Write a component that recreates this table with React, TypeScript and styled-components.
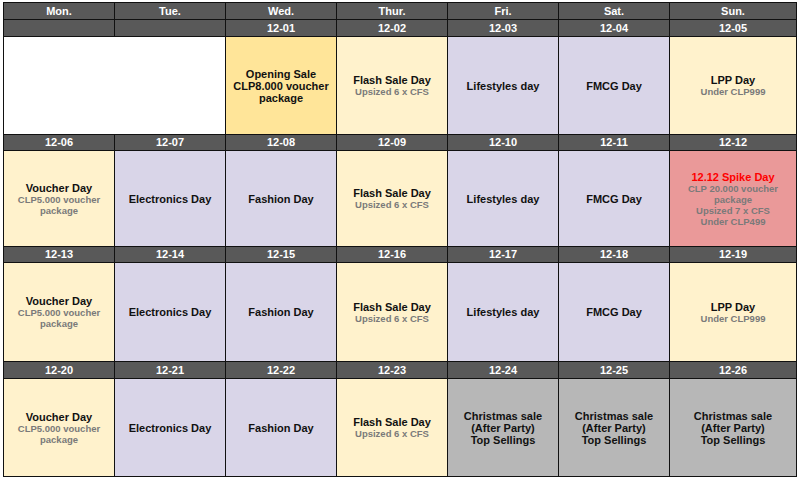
import React from "react";
import styled, { createGlobalStyle } from "styled-components";

const Global = createGlobalStyle`
  html, body { margin: 0; padding: 0; background: #ffffff; }
  body { font-family: "Liberation Sans", Arial, sans-serif; }
`;

const Page = styled.div`
  padding: 2px 0 0 3px;
`;

const Grid = styled.div`
  display: grid;
  width: 794px;
  box-sizing: border-box;
  grid-template-columns: repeat(6, 110px) 1fr;
  grid-auto-rows: auto;
  gap: 1px;
  padding: 1px;
  background: #111111;
`;

const HeadCell = styled.div<{ $h: number }>`
  height: ${(p) => p.$h}px;
  background: #595959;
  color: #ffffff;
  font-weight: bold;
  font-size: 11px;
  display: flex;
  align-items: center;
  justify-content: center;
  line-height: 1;
`;

type Tone = "white" | "gold" | "cream" | "lavender" | "red" | "gray";

const tones: Record<Tone, string> = {
  white: "#ffffff",
  gold: "#ffe599",
  cream: "#fff2cc",
  lavender: "#d9d5e8",
  red: "#ea9999",
  gray: "#b7b7b7",
};

const Cell = styled.div<{ $tone: Tone; $h: number; $span?: number }>`
  height: ${(p) => p.$h}px;
  background: ${(p) => tones[p.$tone]};
  grid-column: span ${(p) => p.$span ?? 1};
  display: flex;
  flex-direction: column;
  align-items: center;
  justify-content: center;
  text-align: center;
  padding: 0 4px;
  box-sizing: border-box;
`;

const Title = styled.div<{ $red?: boolean }>`
  font-size: 11px;
  font-weight: bold;
  line-height: 12px;
  color: ${(p) => (p.$red ? "#ff0000" : "#111111")};
`;

const Sub = styled.div`
  font-size: 9.5px;
  font-weight: bold;
  line-height: 11px;
  color: #7a7a7a;
`;

type Entry = { tone: Tone; title?: string[]; sub?: string[]; red?: boolean; span?: number };

const days = ["Mon.", "Tue.", "Wed.", "Thur.", "Fri.", "Sat.", "Sun."];

const voucher: Entry = { tone: "cream", title: ["Voucher Day"], sub: ["CLP5.000 voucher", "package"] };
const elec: Entry = { tone: "lavender", title: ["Electronics Day"] };
const fashion: Entry = { tone: "lavender", title: ["Fashion Day"] };
const flash: Entry = { tone: "cream", title: ["Flash Sale Day"], sub: ["Upsized 6 x CFS"] };
const life: Entry = { tone: "lavender", title: ["Lifestyles day"] };
const fmcg: Entry = { tone: "lavender", title: ["FMCG Day"] };
const lpp: Entry = { tone: "cream", title: ["LPP Day"], sub: ["Under CLP999"] };
const xmas: Entry = { tone: "gray", title: ["Christmas sale", "(After Party)", "Top Sellings"] };

const weeks: { dates: string[]; h: number; dh: number; cells: Entry[] }[] = [
  {
    dates: ["", "", "12-01", "12-02", "12-03", "12-04", "12-05"],
    h: 97,
    dh: 16,
    cells: [
      { tone: "white", span: 2 },
      { tone: "gold", title: ["Opening Sale", "CLP8.000 voucher", "package"] },
      flash,
      life,
      fmcg,
      lpp,
    ],
  },
  {
    dates: ["12-06", "12-07", "12-08", "12-09", "12-10", "12-11", "12-12"],
    h: 95,
    dh: 15,
    cells: [
      voucher,
      elec,
      fashion,
      flash,
      life,
      fmcg,
      {
        tone: "red",
        title: ["12.12 Spike Day"],
        red: true,
        sub: ["CLP 20.000 voucher", "package", "Upsized 7 x CFS", "Under CLP499"],
      },
    ],
  },
  {
    dates: ["12-13", "12-14", "12-15", "12-16", "12-17", "12-18", "12-19"],
    h: 98,
    dh: 15,
    cells: [voucher, elec, fashion, flash, life, fmcg, lpp],
  },
  {
    dates: ["12-20", "12-21", "12-22", "12-23", "12-24", "12-25", "12-26"],
    h: 97,
    dh: 16,
    cells: [voucher, elec, fashion, flash, xmas, xmas, xmas],
  },
];

export default function App() {
  return (
    <>
      <Global />
      <Page>
        <Grid>
          {days.map((d) => (
            <HeadCell key={d} $h={16}>
              {d}
            </HeadCell>
          ))}
          {weeks.map((w, wi) => (
            <React.Fragment key={wi}>
              {w.dates.map((d, i) => (
                <HeadCell key={`d${i}`} $h={w.dh}>
                  {d}
                </HeadCell>
              ))}
              {w.cells.map((c, i) => (
                <Cell key={`c${i}`} $tone={c.tone} $h={w.h} $span={c.span}>
                  {c.title?.map((t) => (
                    <Title key={t} $red={c.red}>
                      {t}
                    </Title>
                  ))}
                  {c.sub?.map((s) => (
                    <Sub key={s}>{s}</Sub>
                  ))}
                </Cell>
              ))}
            </React.Fragment>
          ))}
        </Grid>
      </Page>
    </>
  );
}
